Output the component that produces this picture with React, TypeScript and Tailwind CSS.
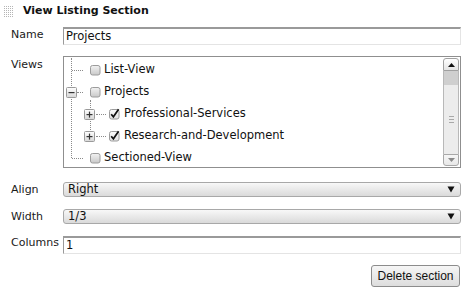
import React from 'react'

const font = { fontFamily: '"DejaVu Sans", Verdana, sans-serif' }

function Grip() {
  const dots = []
  for (let r = 0; r < 6; r++) {
    for (let c = 0; c < 5; c++) {
      dots.push(<rect key={`${r}-${c}`} x={c * 2} y={r * 2} width={1} height={1} fill="#b5b5b5" />)
    }
  }
  return (
    <svg width="10" height="12" viewBox="0 0 10 12" className="block">
      {dots}
    </svg>
  )
}

function Box({ checked }: { checked?: boolean }) {
  return (
    <svg width="12" height="12" viewBox="0 0 12 12" className="block shrink-0">
      <defs>
        <linearGradient id={checked ? 'cbc' : 'cbu'} x1="0" y1="0" x2="0" y2="1">
          <stop offset="0" stopColor={checked ? '#fbfbfb' : '#f2f2f2'} />
          <stop offset="1" stopColor={checked ? '#e2e2e2' : '#c9c9c9'} />
        </linearGradient>
      </defs>
      <rect x="1.5" y="1.5" width="9.5" height="9.5" rx="2" fill={`url(#${checked ? 'cbc' : 'cbu'})`} stroke="#9c9c9c" />
      {checked && <path d="M3.2 6.2 L5.4 8.8 L10.6 1.2" fill="none" stroke="#111" strokeWidth="1.7" />}
    </svg>
  )
}

function Toggle({ open }: { open?: boolean }) {
  return (
    <svg width="11" height="11" viewBox="0 0 11 11" className="block shrink-0">
      <defs>
        <linearGradient id="tg" x1="0" y1="0" x2="0" y2="1">
          <stop offset="0" stopColor="#ffffff" />
          <stop offset="1" stopColor="#d6d6d6" />
        </linearGradient>
      </defs>
      <rect x="0.5" y="0.5" width="10" height="10" rx="1" fill="url(#tg)" stroke="#9a9a9a" />
      <rect x="2.5" y="5" width="6" height="1.2" fill="#333" />
      {!open && <rect x="4.9" y="2.6" width="1.2" height="6" fill="#333" />}
    </svg>
  )
}

function Select({ value }: { value: string }) {
  return (
    <div className="flex-1 h-[15px] flex items-center justify-between rounded-[3px] border border-[#a8a8a8] bg-gradient-to-b from-[#f8f8f8] to-[#dadada] pl-[4px] pr-[5px] text-[11.5px] leading-none text-[#111]">
      <span>{value}</span>
      <svg width="8" height="7" viewBox="0 0 8 7"><path d="M0.5 0.5 H7.5 L4 6.5 Z" fill="#111" /></svg>
    </div>
  )
}

function Label({ children, mt = 'mt-0' }: { children: React.ReactNode; mt?: string }) {
  return <div className={`w-[63px] shrink-0 pl-[11px] text-[11px] leading-none text-[#1a1a1a] ${mt}`}>{children}</div>
}

const dotV = 'border-l border-dotted border-[#8a8a8a]'
const dotH = 'border-t border-dotted border-[#8a8a8a]'

function Tree() {
  return (
    <div className="flex-1 h-[112px] flex border border-[#8f8f8f] bg-white">
      <div className="flex-1 relative pt-[2px] text-[11.5px] text-[#111]">
        {/* root vertical connector */}
        <span className={`absolute left-[7px] top-[1px] h-[100px] ${dotV}`} />
        {/* child vertical connector */}
        <span className={`absolute left-[26px] top-[43px] h-[36px] ${dotV}`} />

        <div className="relative h-[22px] flex items-center">
          <span className={`absolute left-[8px] top-[11px] w-[11px] ${dotH}`} />
          <div className="ml-[25px]"><Box /></div>
          <span className="ml-[3px]">List-View</span>
        </div>

        <div className="relative h-[22px] flex items-center">
          <span className={`absolute left-[13px] top-[11px] w-[6px] ${dotH}`} />
          <div className="ml-[2px] bg-white"><Toggle open /></div>
          <div className="ml-[12px]"><Box /></div>
          <span className="ml-[3px]">Projects</span>
        </div>

        <div className="relative h-[22px] flex items-center">
          <span className={`absolute left-[32px] top-[11px] w-[10px] ${dotH}`} />
          <div className="ml-[20px] bg-white"><Toggle /></div>
          <div className="ml-[13px]"><Box checked /></div>
          <span className="ml-[4px]">Professional-Services</span>
        </div>

        <div className="relative h-[22px] flex items-center">
          <span className={`absolute left-[32px] top-[11px] w-[10px] ${dotH}`} />
          <div className="ml-[20px] bg-white"><Toggle /></div>
          <div className="ml-[13px]"><Box checked /></div>
          <span className="ml-[4px]">Research-and-Development</span>
        </div>

        <div className="relative h-[22px] flex items-center">
          <span className={`absolute left-[8px] top-[11px] w-[11px] ${dotH}`} />
          <div className="ml-[25px]"><Box /></div>
          <span className="ml-[3px]">Sectioned-View</span>
        </div>
      </div>

      {/* scrollbar */}
      <div className="w-[17px] flex flex-col py-[1px] pr-[1px]">
        <div className="h-[13px] flex items-center justify-center rounded-t-[3px] border border-[#a0a0a0] bg-gradient-to-b from-[#ffffff] to-[#e4e4e4]">
          <svg width="7" height="4" viewBox="0 0 7 4"><path d="M0 4 H7 L3.5 0 Z" fill="#111" /></svg>
        </div>
        <div className="h-[14px] bg-[#cfcfcf] border-x border-[#b8b8b8]" />
        <div className="flex-1 flex flex-col items-center justify-center gap-[2px] bg-[#ececec] border-x border-[#b8b8b8]">
          <span className="w-[5px] h-px bg-[#a8a8a8]" />
          <span className="w-[5px] h-px bg-[#a8a8a8]" />
          <span className="w-[5px] h-px bg-[#a8a8a8]" />
        </div>
        <div className="h-[12px] flex items-center justify-center rounded-b-[3px] border border-[#a8a8a8] bg-gradient-to-b from-[#f6f6f6] to-[#e8e8e8]">
          <svg width="7" height="4" viewBox="0 0 7 4"><path d="M0 0 H7 L3.5 4 Z" fill="#8a8a8a" /></svg>
        </div>
      </div>
    </div>
  )
}

function TextInput({ value }: { value: string }) {
  return (
    <div className="flex-1 h-[18px] flex items-center border-t-2 border-l border-t-[#9a9a9a] border-l-[#9a9a9a] border-r border-b border-r-[#e4e4e4] border-b-[#e4e4e4] pl-[2px] text-[11.5px] leading-none text-[#111]">
      {value}
    </div>
  )
}

export default function App() {
  return (
    <div className="w-[464px] h-[290px] bg-white overflow-hidden" style={font}>
      <div className="flex items-center h-[22px] pl-[4px] pt-[1px]">
        <Grip />
        <span className="ml-[9px] text-[11px] font-bold text-[#111]">View Listing Section</span>
      </div>

      <div className="flex pr-[3px] mt-[5px]">
        <Label mt="mt-[2px]">Name</Label>
        <TextInput value="Projects" />
      </div>

      <div className="flex pr-[3px] mt-[11px]">
        <Label mt="mt-[3px]">Views</Label>
        <Tree />
      </div>

      <div className="flex pr-[3px] mt-[14px] items-center">
        <Label>Align</Label>
        <Select value="Right" />
      </div>

      <div className="flex pr-[3px] mt-[12px] items-center">
        <Label>Width</Label>
        <Select value="1/3" />
      </div>

      <div className="flex pr-[3px] mt-[12px]">
        <Label mt="mt-[1px]">Columns</Label>
        <TextInput value="1" />
      </div>

      <div className="flex justify-end pr-[4px] mt-[11px]">
        <button
          className="w-[89px] h-[22px] rounded-[3px] border border-[#8c8c8c] bg-gradient-to-b from-[#f6f6f6] to-[#dddddd] text-[12px] text-[#111]"
          style={{ fontFamily: '"Liberation Sans", Arial, sans-serif' }}
        >
          Delete section
        </button>
      </div>
    </div>
  )
}
